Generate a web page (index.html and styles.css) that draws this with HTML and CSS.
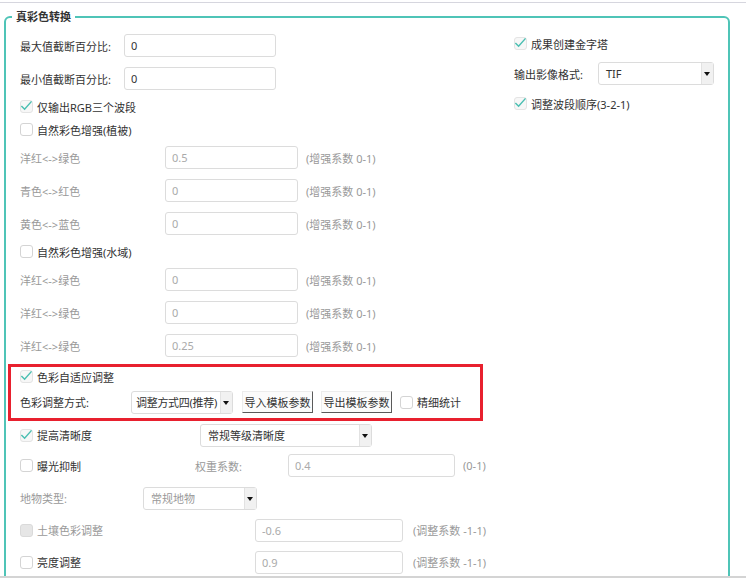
FILE: index.html
```html
<!DOCTYPE html>
<html lang="zh">
<head>
    <meta charset="UTF-8">
    <link rel="stylesheet" href="styles.css">
    <title>真彩色转换</title>
</head>
<body>
<div class="panel">
    <fieldset class="group">
        <legend>真彩色转换</legend>
        <div class="cols">
            <div class="left">
                <div class="row">
                    <span class="lbl w104">最大值截断百分比:</span>
                    <input class="inp w152" value="0">
                </div>
                <div class="row">
                    <span class="lbl w104">最小值截断百分比:</span>
                    <input class="inp w152" value="0">
                </div>
                <div class="row cbrow">
                    <span class="cb on"><svg viewBox="0 0 13 13"><path d="M1.5 6.5 L5 10 L12.5 1.5"/></svg></span>
                    <span class="cbtxt">仅输出RGB三个波段</span>
                </div>
                <div class="row cbrow">
                    <span class="cb"></span>
                    <span class="cbtxt">自然彩色增强(植被)</span>
                </div>
                <div class="row">
                    <span class="lbl gray w145">洋红&lt;-&gt;绿色</span>
                    <input class="inp off w133" value="0.5">
                    <span class="hint">(增强系数 0-1)</span>
                </div>
                <div class="row">
                    <span class="lbl gray w145">青色&lt;-&gt;红色</span>
                    <input class="inp off w133" value="0">
                    <span class="hint">(增强系数 0-1)</span>
                </div>
                <div class="row">
                    <span class="lbl gray w145">黄色&lt;-&gt;蓝色</span>
                    <input class="inp off w133" value="0">
                    <span class="hint">(增强系数 0-1)</span>
                </div>
                <div class="row cbrow">
                    <span class="cb"></span>
                    <span class="cbtxt">自然彩色增强(水域)</span>
                </div>
                <div class="row">
                    <span class="lbl gray w145">洋红&lt;-&gt;绿色</span>
                    <input class="inp off w133" value="0">
                    <span class="hint">(增强系数 0-1)</span>
                </div>
                <div class="row">
                    <span class="lbl gray w145">洋红&lt;-&gt;绿色</span>
                    <input class="inp off w133" value="0">
                    <span class="hint">(增强系数 0-1)</span>
                </div>
                <div class="row">
                    <span class="lbl gray w145">洋红&lt;-&gt;绿色</span>
                    <input class="inp off w133" value="0.25">
                    <span class="hint">(增强系数 0-1)</span>
                </div>

                <div class="highlight">
                    <div class="row hrow1">
                        <span class="cb on"><svg viewBox="0 0 13 13"><path d="M1.5 6.5 L5 10 L12.5 1.5"/></svg></span>
                        <span class="cbtxt">色彩自适应调整</span>
                    </div>
                    <div class="row hrow2">
                        <span class="lbl w111">色彩调整方式:</span>
                        <div class="sel w102"><span class="seltxt tight">调整方式四(推荐)</span><span class="arr"></span></div>
                        <button class="btn">导入模板参数</button>
                        <button class="btn">导出模板参数</button>
                        <span class="cb"></span>
                        <span class="cbtxt">精细统计</span>
                    </div>
                </div>

                <div class="row r28">
                    <span class="cbgroup w180">
                        <span class="cb on"><svg viewBox="0 0 13 13"><path d="M1.5 6.5 L5 10 L12.5 1.5"/></svg></span>
                        <span class="cbtxt">提高清晰度</span>
                    </span>
                    <div class="sel w172"><span class="seltxt">常规等级清晰度</span><span class="arr"></span></div>
                </div>
                <div class="row">
                    <span class="cbgroup w175">
                        <span class="cb"></span>
                        <span class="cbtxt">曝光抑制</span>
                    </span>
                    <span class="lbl gray w93">权重系数:</span>
                    <input class="inp off w167" value="0.4">
                    <span class="hint">(0-1)</span>
                </div>
                <div class="row r32">
                    <span class="lbl gray w123">地物类型:</span>
                    <div class="sel off w114"><span class="seltxt">常规地物</span><span class="arr"></span></div>
                </div>
                <div class="row r32">
                    <span class="cbgroup w235">
                        <span class="cb dis"></span>
                        <span class="cbtxt gray">土壤色彩调整</span>
                    </span>
                    <input class="inp off w148" value="-0.6">
                    <span class="hint wide">(调整系数 -1-1)</span>
                </div>
                <div class="row r32">
                    <span class="cbgroup w235">
                        <span class="cb"></span>
                        <span class="cbtxt">亮度调整</span>
                    </span>
                    <input class="inp off w148" value="0.9">
                    <span class="hint wide">(调整系数 -1-1)</span>
                </div>
            </div>

            <div class="right">
                <div class="rrow r29">
                    <span class="cb on"><svg viewBox="0 0 13 13"><path d="M1.5 6.5 L5 10 L12.5 1.5"/></svg></span>
                    <span class="cbtxt">成果创建金字塔</span>
                </div>
                <div class="rrow r31">
                    <span class="lbl w84">输出影像格式:</span>
                    <div class="sel w116"><span class="seltxt">TIF</span><span class="arr"></span></div>
                </div>
                <div class="rrow r29">
                    <span class="cb on"><svg viewBox="0 0 13 13"><path d="M1.5 6.5 L5 10 L12.5 1.5"/></svg></span>
                    <span class="cbtxt">调整波段顺序(3-2-1)</span>
                </div>
            </div>
        </div>
    </fieldset>
</div>
</body>
</html>
```

FILE: styles.css
```css
body {
    margin: 0;
    font-family: "Noto Sans", "Noto Sans CJK SC", sans-serif;
    font-size: 11px;
    color: #333;
    background-color: #fff;
}

.panel {
    margin-top: 2px;
    height: 573px;
    border-top: 1px solid #d6d6de;
    border-bottom: 2px solid #d4d4d4;
    overflow: hidden;
}

.group {
    margin: 6px 16px 0 4px;
    padding: 4px 0 30px 0;
    border: 2px solid #4fc4b7;
    border-radius: 6px;
}

.group legend {
    margin-left: 6px;
    padding: 0 4px;
    font-weight: bold;
    font-size: 11px;
    line-height: 16px;
    color: #333;
}

.cols {
    display: flex;
}

.left {
    width: 490px;
}

.right {
    flex: 1;
    padding-left: 18px;
}

.row {
    display: flex;
    align-items: center;
    height: 33px;
    padding-left: 14px;
}

.row.cbrow { height: 23px; }
.row.r28 { height: 28px; }
.row.r32 { height: 32px; }

.rrow {
    display: flex;
    align-items: center;
}

.rrow.r29 { height: 29px; }
.rrow.r31 { height: 31px; }

.lbl {
    flex: none;
    white-space: nowrap;
}

.gray { color: #999; }

.w84 { width: 84px; }
.w93 { width: 93px; }
.w102 { width: 102px; }
.w104 { width: 104px; }
.w111 { width: 111px; }
.w114 { width: 114px; }
.w116 { width: 116px; }
.w123 { width: 123px; }
.w133 { width: 133px; }
.w145 { width: 145px; }
.w148 { width: 148px; }
.w152 { width: 152px; }
.w167 { width: 167px; }
.w172 { width: 172px; }
.w175 { width: 175px; }
.w180 { width: 180px; }
.w235 { width: 235px; }

.inp {
    flex: none;
    box-sizing: border-box;
    height: 23px;
    margin: 0;
    padding: 0 6px;
    border: 1px solid #dcdcdc;
    border-radius: 3px;
    font: inherit;
    color: #333;
    background-color: #fff;
    outline: none;
}

.inp.off { color: #aaa; }

.hint {
    margin-left: 8px;
    color: #999;
    white-space: nowrap;
}

.hint.wide { margin-left: 10px; }

/* checkboxes */
.cbgroup {
    display: flex;
    align-items: center;
    flex: none;
}

.cb {
    flex: none;
    box-sizing: border-box;
    width: 13px;
    height: 13px;
    margin-right: 4px;
    border: 1px solid #d4d4d4;
    border-radius: 3px;
    background-color: #fff;
}

.cb svg {
    display: block;
    width: 12px;
    height: 12px;
    margin: -1px 0 0 -1px;
    overflow: visible;
}

.cb svg path {
    fill: none;
    stroke: #4bbfb2;
    stroke-width: 1.6;
}

.cb.on {
    border-color: #e4e4e4;
    background-color: #f7f7f7;
}

.cb.dis {
    background-color: #e6e6e6;
    border-color: #dadada;
}

.cbtxt {
    white-space: nowrap;
}

/* dropdowns */
.sel {
    flex: none;
    display: flex;
    box-sizing: border-box;
    height: 23px;
    border: 1px solid #dcdcdc;
    border-radius: 3px;
    background-color: #fff;
}

.seltxt {
    flex: 1;
    padding-left: 7px;
    line-height: 21px;
    white-space: nowrap;
    overflow: hidden;
}

.seltxt.tight {
    padding-left: 4px;
    letter-spacing: -0.3px;
    overflow: visible;
}

.sel.off .seltxt { color: #999; }

.arr {
    flex: none;
    width: 11px;
    border-left: 1px solid #e2e2e2;
    background-color: #f1f1f1;
    position: relative;
}

.arr::after {
    content: "";
    position: absolute;
    left: 2px;
    top: 9px;
    border-top: 4px solid #111;
    border-left: 3.5px solid transparent;
    border-right: 3.5px solid transparent;
}

/* red highlight box */
.highlight {
    box-sizing: border-box;
    width: 475px;
    margin: 2px 0 0 2px;
    border: 3px solid #e8202e;
}

.highlight .row { padding-left: 9px; }
.highlight .hrow1 { height: 19px; }
.highlight .hrow2 { height: 32px; }

.btn {
    flex: none;
    box-sizing: border-box;
    width: 71px;
    height: 22px;
    margin-left: 9px;
    padding: 0;
    border: 1px solid;
    border-color: #ececec #5a5a5a #5a5a5a #ececec;
    background-color: #fbfbfb;
    font: inherit;
    color: #333;
}

.btn + .btn { margin-left: 8px; }
.btn + .cb { margin-left: 8px; }
```
